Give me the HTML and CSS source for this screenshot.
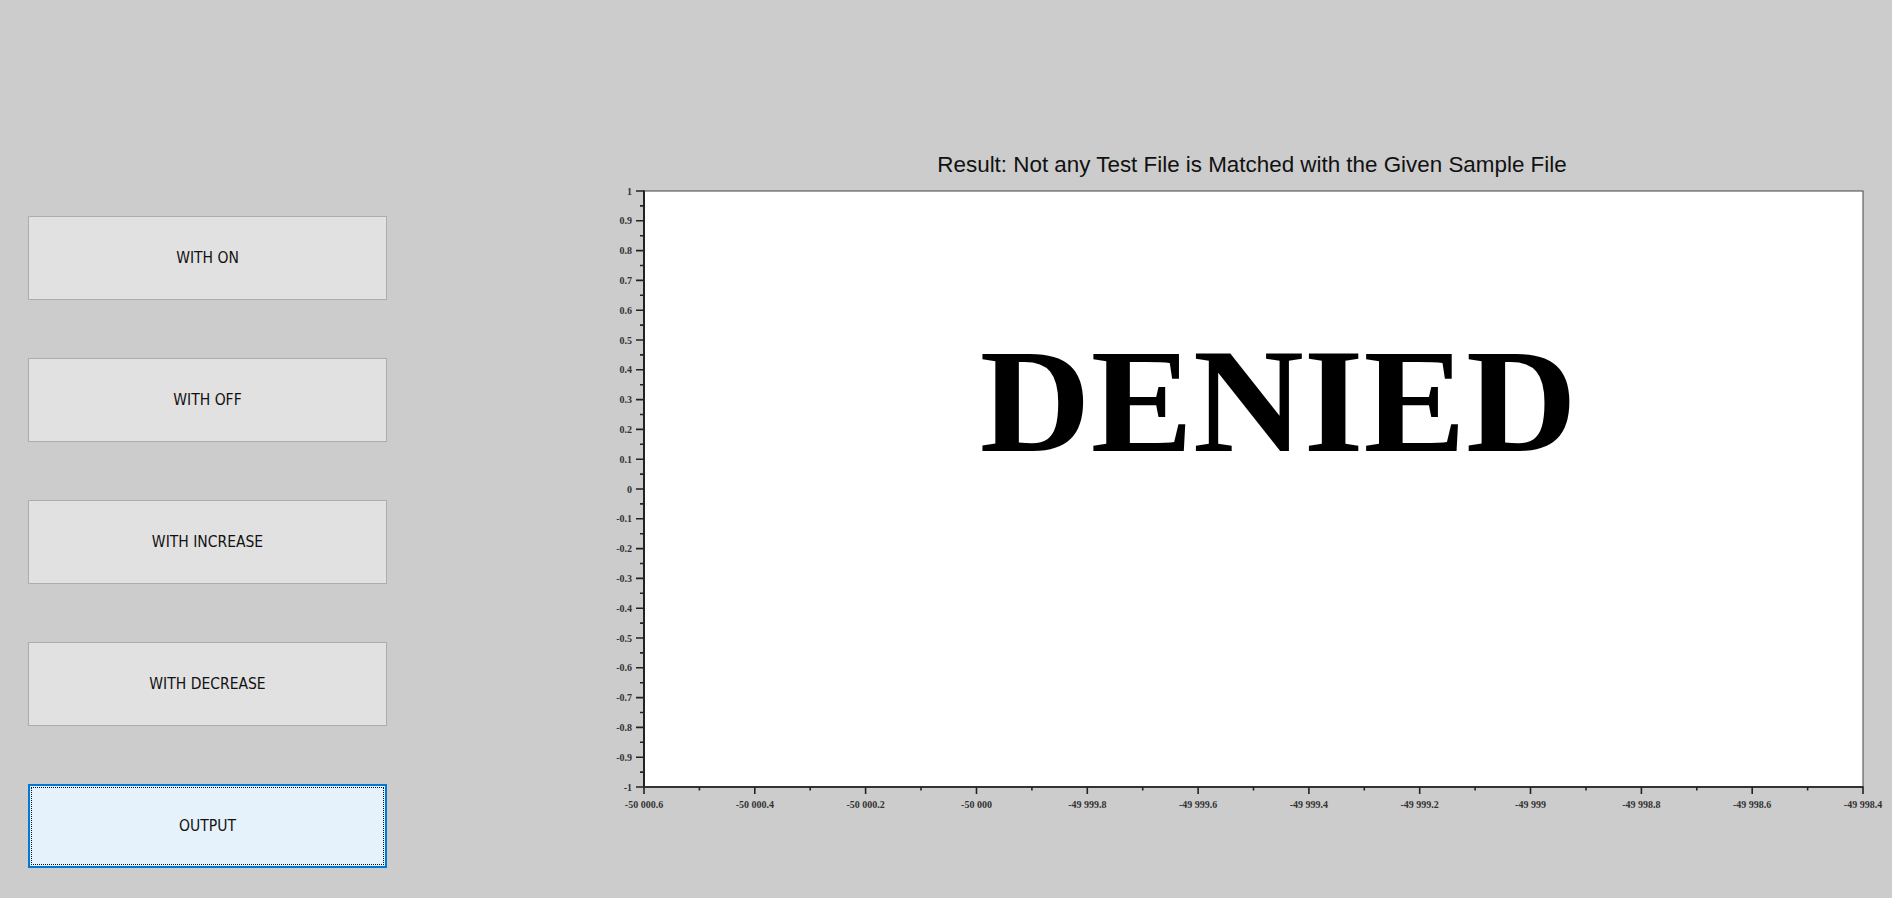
FILE: index.html
```html
<!DOCTYPE html>
<html>
<head>
<meta charset="utf-8">
<title>Result</title>
<link rel="stylesheet" href="styles.css">
</head>
<body>
<div class="app">
  <div class="controls">
    <button class="btn">WITH ON</button>
    <button class="btn">WITH OFF</button>
    <button class="btn">WITH INCREASE</button>
    <button class="btn">WITH DECREASE</button>
    <button class="btn btn-focus">OUTPUT</button>
  </div>
  <div class="chart">
    <svg class="plot" width="1292" height="898" viewBox="0 0 1292 898" xmlns="http://www.w3.org/2000/svg">
      <text class="title" x="652" y="172" text-anchor="middle">Result: Not any Test File is Matched with the Given Sample File</text>
      <rect x="44" y="191" width="1219" height="596" fill="#ffffff" stroke="#444" stroke-width="1"/>
      <line x1="44" y1="190.5" x2="44" y2="787" stroke="#222" stroke-width="2"/>
      <line x1="43" y1="787" x2="1263.5" y2="787" stroke="#333" stroke-width="2"/>
      <path stroke="#222" stroke-width="1.6" fill="none" d="M36 191H44M36 220.8H44M36 250.6H44M36 280.4H44M36 310.2H44M36 340H44M36 369.8H44M36 399.6H44M36 429.4H44M36 459.2H44M36 489H44M36 518.8H44M36 548.6H44M36 578.4H44M36 608.2H44M36 638H44M36 667.8H44M36 697.6H44M36 727.4H44M36 757.2H44M36 787H44"/>
      <path stroke="#222" stroke-width="1.6" fill="none" d="M40 205.9H44M40 235.7H44M40 265.5H44M40 295.3H44M40 325.1H44M40 354.9H44M40 384.7H44M40 414.5H44M40 444.3H44M40 474.1H44M40 503.9H44M40 533.7H44M40 563.5H44M40 593.3H44M40 623.1H44M40 652.9H44M40 682.7H44M40 712.5H44M40 742.3H44M40 772.1H44"/>
      <path stroke="#222" stroke-width="1.6" fill="none" d="M44 787V794M154.8 787V794M265.6 787V794M376.5 787V794M487.3 787V794M598.1 787V794M708.9 787V794M819.7 787V794M930.5 787V794M1041.4 787V794M1152.2 787V794M1263 787V794"/>
      <path stroke="#222" stroke-width="1.6" fill="none" d="M99.4 787V790.5M210.2 787V790.5M321 787V790.5M431.9 787V790.5M542.7 787V790.5M653.5 787V790.5M764.3 787V790.5M875.1 787V790.5M986 787V790.5M1096.8 787V790.5M1207.6 787V790.5"/>
      <g class="ylab" text-anchor="end">
        <text x="32" y="194.5">1</text>
        <text x="32" y="224.3">0.9</text>
        <text x="32" y="254.1">0.8</text>
        <text x="32" y="283.9">0.7</text>
        <text x="32" y="313.7">0.6</text>
        <text x="32" y="343.5">0.5</text>
        <text x="32" y="373.3">0.4</text>
        <text x="32" y="403.1">0.3</text>
        <text x="32" y="432.9">0.2</text>
        <text x="32" y="462.7">0.1</text>
        <text x="32" y="492.5">0</text>
        <text x="32" y="522.3">-0.1</text>
        <text x="32" y="552.1">-0.2</text>
        <text x="32" y="581.9">-0.3</text>
        <text x="32" y="611.7">-0.4</text>
        <text x="32" y="641.5">-0.5</text>
        <text x="32" y="671.3">-0.6</text>
        <text x="32" y="701.1">-0.7</text>
        <text x="32" y="730.9">-0.8</text>
        <text x="32" y="760.7">-0.9</text>
        <text x="32" y="790.5">-1</text>
      </g>
      <g class="xlab" text-anchor="middle">
        <text x="44" y="807.5">-50 000.6</text>
        <text x="154.8" y="807.5">-50 000.4</text>
        <text x="265.6" y="807.5">-50 000.2</text>
        <text x="376.5" y="807.5">-50 000</text>
        <text x="487.3" y="807.5">-49 999.8</text>
        <text x="598.1" y="807.5">-49 999.6</text>
        <text x="708.9" y="807.5">-49 999.4</text>
        <text x="819.7" y="807.5">-49 999.2</text>
        <text x="930.5" y="807.5">-49 999</text>
        <text x="1041.4" y="807.5">-49 998.8</text>
        <text x="1152.2" y="807.5">-49 998.6</text>
        <text x="1263" y="807.5">-49 998.4</text>
      </g>
      <text class="stamp" x="678.3" y="450.7" text-anchor="middle" textLength="597" lengthAdjust="spacingAndGlyphs">DENIED</text>
    </svg>
  </div>
</div>
</body>
</html>
```
FILE: styles.css
```css
html, body {
  margin: 0;
  padding: 0;
  background: #cccccc;
}

.app {
  display: flex;
  align-items: flex-start;
  width: 1892px;
  height: 898px;
  overflow: hidden;
}

.controls {
  display: flex;
  flex-direction: column;
  gap: 58px;
  padding: 216px 0 0 28px;
  width: 359px;
  flex: none;
}

.btn {
  display: flex;
  align-items: center;
  justify-content: center;
  box-sizing: border-box;
  width: 359px;
  height: 84px;
  margin: 0;
  padding: 0;
  background: #e1e1e1;
  border: 1px solid #adadad;
  border-radius: 0;
  color: #111111;
  font-family: "DejaVu Sans Condensed", "DejaVu Sans", sans-serif;
  font-size: 15.5px;
  cursor: default;
}

.btn-focus {
  background: #e5f1fb;
  border: 1px solid #0078d7;
  box-shadow: inset 0 0 0 1px #0078d7;
  outline: 1px dotted #111111;
  outline-offset: -4px;
}

.chart {
  margin-left: 213px;
  flex: none;
}

.plot {
  display: block;
}

.title {
  font-family: "Liberation Sans", Arial, sans-serif;
  font-size: 22.4px;
  fill: #111111;
}

.ylab text,
.xlab text {
  font-family: "Liberation Serif", "Times New Roman", serif;
  font-weight: bold;
  font-size: 10px;
  fill: #333333;
}

.stamp {
  font-family: "Liberation Serif", "Times New Roman", serif;
  font-weight: bold;
  font-size: 148px;
  fill: #000000;
}
```
